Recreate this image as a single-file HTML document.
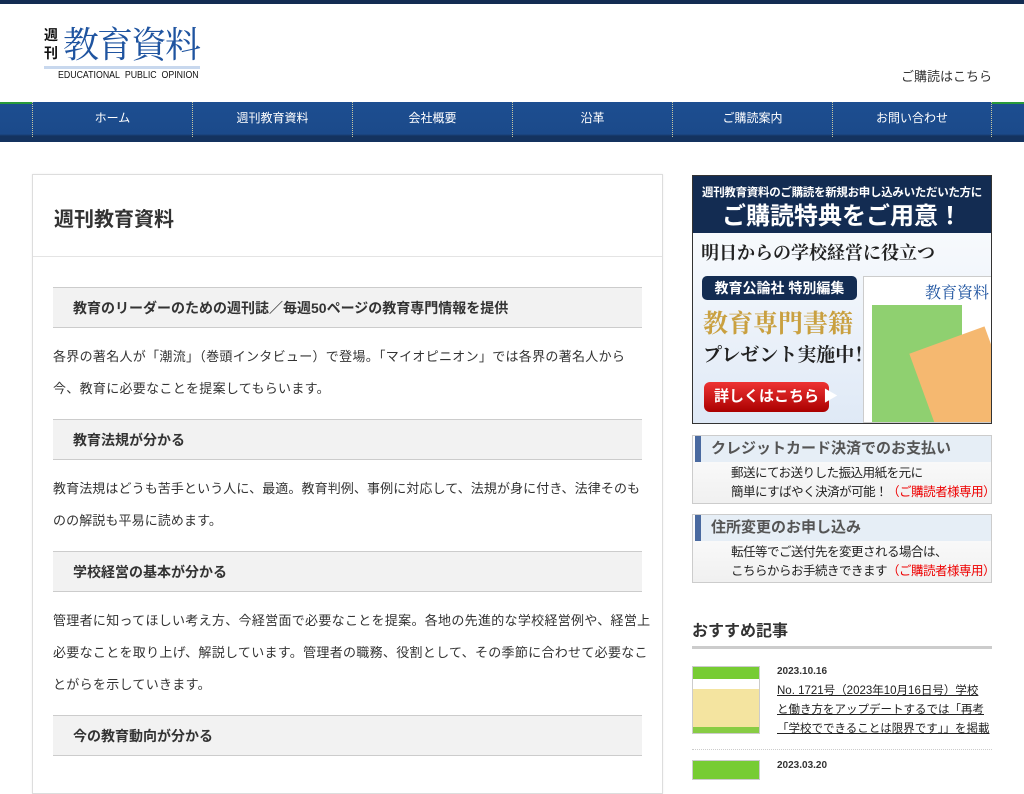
<!DOCTYPE html>
<html><head><meta charset="utf-8"><style>
*{margin:0;padding:0;box-sizing:border-box}
body{width:1024px;height:768px;overflow:hidden;background:#fff;font-family:"Liberation Sans","Noto Sans CJK JP",sans-serif;color:#333;position:relative}
.top{height:4px;background:#132c52}
.logo{position:absolute;left:44px;top:22px}
.sub{position:absolute;right:32px;top:66px;font-size:13px;color:#333}
.nav{position:absolute;top:102px;left:0;width:1024px;height:40px;background:linear-gradient(#1d4e91,#1b4a8a 80%,#14335f 85%,#14335f);}
.nav .g1{position:absolute;left:0;top:0;width:32px;height:2px;background:#2a9a3a}
.nav .g2{position:absolute;right:0;top:0;width:32px;height:2px;background:#2a9a3a}
.nav a{position:absolute;top:0;height:35px;width:160px;border-left:1px dotted #c8c8a0;color:#fff;font-size:12px;text-align:center;line-height:33px;text-decoration:none}
.main{position:absolute;left:32px;top:174px;width:631px;height:620px;border:1px solid #ddd;box-shadow:0 0 2px #eee}
.main h1{font-size:20px;font-weight:bold;padding:28px 0 0 21px;height:82px;border-bottom:1px solid #e4e4e4;color:#333}
.main h3{margin:30px 20px 0 20px;background:#f2f2f2;border-top:1px solid #ccc;border-bottom:1px solid #ccc;height:41px;line-height:40px;padding-left:20px;font-size:14px;font-weight:bold}
.main p{margin:0 20px;padding-top:13px;font-size:13px;line-height:32px;letter-spacing:.3px;white-space:nowrap}
.main p.w{letter-spacing:.1px}
.main h3.n{margin-top:14px}
.side{position:absolute;left:692px;width:300px}
.ban{top:175px;height:249px;border:1px solid #333;background:linear-gradient(#fff,#dfe9f6);overflow:hidden}
.ban .hd{background:#132c52;height:57px;color:#fff;text-align:center;font-weight:bold;white-space:nowrap}
.box{border:1px solid #ccc;background:linear-gradient(#fff,#f0f0f0)}
.box .t{height:26px;background:#e6eef6;border-left:6px solid #4a6aa0;margin-left:2px;padding-left:10px;font-size:15px;font-weight:bold;color:#555;line-height:26px}
.box .b{padding:2px 0 0 38px;font-size:12.5px;line-height:19px;color:#222;white-space:nowrap;letter-spacing:-.5px}
.red{color:#e00}
</style></head><body>
<div class="top"></div>
<div class="logo">
<div style="position:absolute;left:0;top:4px;width:16px;font:bold 14px 'Noto Sans CJK JP',sans-serif;line-height:18px;color:#111">週<br>刊</div>
<div style="position:absolute;left:19px;top:-2px;font:36px 'Noto Serif CJK SC',serif;color:#1f54a0;white-space:nowrap;letter-spacing:-2px;line-height:46px">教育資料</div>
<div style="position:absolute;left:0;top:44px;width:156px;height:3px;background:#c8d8ee"></div>
<div style="position:absolute;left:14px;top:48px;font:10px 'Liberation Sans Narrow','Liberation Sans',sans-serif;color:#111;white-space:nowrap;transform:scaleX(.88);transform-origin:left">EDUCATIONAL&nbsp; PUBLIC&nbsp; OPINION</div>
</div>
<div class="sub">ご購読はこちら</div>
<div class="nav"><div class="g1"></div><div class="g2"></div>
<a style="left:32px">ホーム</a><a style="left:192px">週刊教育資料</a><a style="left:352px">会社概要</a><a style="left:512px">沿革</a><a style="left:672px">ご購読案内</a><a style="left:832px;border-right:1px dotted #c8c8a0">お問い合わせ</a></div>

<div class="main">
<h1>週刊教育資料</h1>
<h3>教育のリーダーのための週刊誌／毎週50ページの教育専門情報を提供</h3>
<p>各界の著名人が「潮流」（巻頭インタビュー）で登場。「マイオピニオン」では各界の著名人から<br>今、教育に必要なことを提案してもらいます。</p>
<h3 class="n">教育法規が分かる</h3>
<p class="w">教育法規はどうも苦手という人に、最適。教育判例、事例に対応して、法規が身に付き、法律そのも<br>のの解説も平易に読めます。</p>
<h3 class="n">学校経営の基本が分かる</h3>
<p>管理者に知ってほしい考え方、今経営面で必要なことを提案。各地の先進的な学校経営例や、経営上<br>必要なことを取り上げ、解説しています。管理者の職務、役割として、その季節に合わせて必要なこ<br>とがらを示していきます。</p>
<h3 class="n">今の教育動向が分かる</h3>
</div>

<div class="side ban" style="position:absolute">
<div class="hd"><div style="font-size:11.5px;padding-top:8px;letter-spacing:-.3px">週刊教育資料のご購読を新規お申し込みいただいた方に</div><div style="font-size:24px;line-height:34px">ご購読特典をご用意！</div></div>
<div style="font:bold 18px 'Noto Serif CJK SC',serif;padding:6px 0 0 8px;color:#222;white-space:nowrap">明日からの学校経営に役立つ</div>
<div style="position:absolute;left:9px;top:100px;width:155px;height:24px;background:#132c52;border-radius:5px;color:#fff;font-weight:bold;font-size:14px;text-align:center;line-height:24px">教育公論社 特別編集</div>
<div style="position:absolute;left:10px;top:128px;font:bold 25px 'Noto Serif CJK SC',serif;color:#c9a040;white-space:nowrap">教育専門書籍</div>
<div style="position:absolute;left:10px;top:164px;font:bold 19px 'Noto Serif CJK SC',serif;color:#222;white-space:nowrap">プレゼント実施中！</div>
<div style="position:absolute;left:11px;top:206px;width:125px;height:30px;background:linear-gradient(#e33,#a00);border-radius:6px;color:#fff;font-weight:bold;font-size:15px;line-height:30px;padding-left:10px;white-space:nowrap">詳しくはこちら ▶</div>
<div style="position:absolute;left:170px;top:100px;width:129px;height:147px;background:#fff;border:1px solid #ccc;overflow:hidden"><div style="margin:28px 0 0 8px;height:120px;width:90px;background:#8fd070"></div><div style="position:absolute;left:60px;top:60px;width:80px;height:100px;background:#f5b870;transform:rotate(-20deg)"></div><div style="position:absolute;left:8px;top:3px;font:16px 'Noto Serif CJK SC',serif;color:#1f54a0;right:2px;text-align:right;white-space:nowrap">教育資料</div></div>
</div>

<div class="side box" style="position:absolute;top:435px;height:69px"><div class="t">クレジットカード決済でのお支払い</div><div class="b">郵送にてお送りした振込用紙を元に<br>簡単にすばやく決済が可能！<span class="red">（ご購読者様専用）</span></div></div>
<div class="side box" style="position:absolute;top:514px;height:69px"><div class="t">住所変更のお申し込み</div><div class="b">転任等でご送付先を変更される場合は、<br>こちらからお手続きできます<span class="red">（ご購読者様専用）</span></div></div>

<div class="side" style="position:absolute;top:617px;height:32px;border-bottom:3px solid #ccc;font-size:16px;font-weight:bold">おすすめ記事</div>
<div class="side" style="position:absolute;top:666px;height:84px;border-bottom:1px dotted #ccc">
<div style="position:absolute;left:0;top:0;width:68px;height:68px;border:1px solid #ccc;background:linear-gradient(#7c3 0 12px,#fff 12px 22px,#f4e4a0 22px 60px,#8c4 60px)"></div>
<div style="position:absolute;left:85px;top:0;font-size:10px;font-weight:bold">2023.10.16</div>
<div style="position:absolute;left:85px;top:16px;font-size:11.5px;line-height:19px;text-decoration:underline;color:#222;white-space:nowrap;overflow:hidden;width:215px">No. 1721号（2023年10月16日号）学校<br>と働き方をアップデートするでは「再考<br>「学校でできることは限界です」」を掲載</div>
</div>
<div class="side" style="position:absolute;top:760px"><div style="width:68px;height:20px;border:1px solid #ccc;background:#7c3"></div><div style="position:absolute;left:85px;top:0;font-size:10px;font-weight:bold">2023.03.20</div></div>
</body></html>
